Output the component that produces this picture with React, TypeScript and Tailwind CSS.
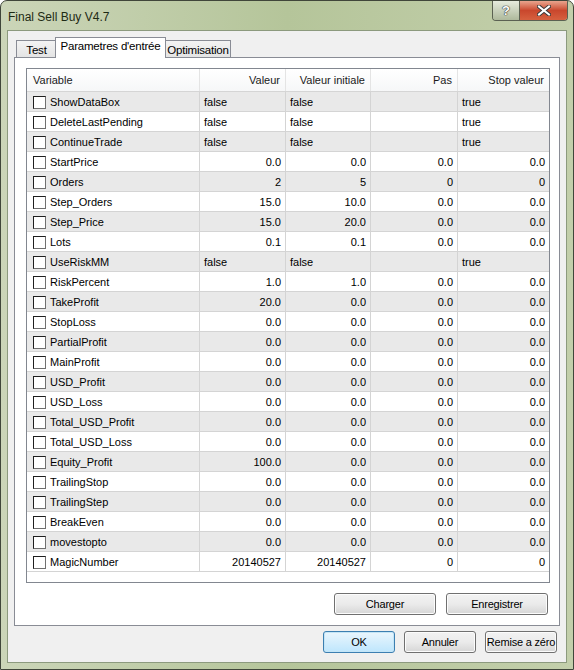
import React from "react";

type Row = { name: string; v: string; init: string; step: string; stop: string; bool?: boolean };

const zeros = (name: string): Row => ({ name, v: "0.0", init: "0.0", step: "0.0", stop: "0.0" });

const rows: Row[] = [
  { name: "ShowDataBox", v: "false", init: "false", step: "", stop: "true", bool: true },
  { name: "DeleteLastPending", v: "false", init: "false", step: "", stop: "true", bool: true },
  { name: "ContinueTrade", v: "false", init: "false", step: "", stop: "true", bool: true },
  zeros("StartPrice"),
  { name: "Orders", v: "2", init: "5", step: "0", stop: "0" },
  { name: "Step_Orders", v: "15.0", init: "10.0", step: "0.0", stop: "0.0" },
  { name: "Step_Price", v: "15.0", init: "20.0", step: "0.0", stop: "0.0" },
  { name: "Lots", v: "0.1", init: "0.1", step: "0.0", stop: "0.0" },
  { name: "UseRiskMM", v: "false", init: "false", step: "", stop: "true", bool: true },
  { name: "RiskPercent", v: "1.0", init: "1.0", step: "0.0", stop: "0.0" },
  { name: "TakeProfit", v: "20.0", init: "0.0", step: "0.0", stop: "0.0" },
  zeros("StopLoss"),
  zeros("PartialProfit"),
  zeros("MainProfit"),
  zeros("USD_Profit"),
  zeros("USD_Loss"),
  zeros("Total_USD_Profit"),
  zeros("Total_USD_Loss"),
  { name: "Equity_Profit", v: "100.0", init: "0.0", step: "0.0", stop: "0.0" },
  zeros("TrailingStop"),
  zeros("TrailingStep"),
  zeros("BreakEven"),
  zeros("movestopto"),
  { name: "MagicNumber", v: "20140527", init: "20140527", step: "0", stop: "0" },
];

function Btn({ label, w, focus }: { label: string; w: string; focus?: boolean }) {
  return (
    <div
      className={`${w} h-[22px] flex items-center justify-center whitespace-nowrap tracking-[-0.2px] rounded-[3px] border text-[11px] text-black ${
        focus
          ? "border-[#3c7fb1] bg-linear-to-b from-[#eaf6fd] to-[#bee6fd] shadow-[inset_0_0_0_1px_#c4e5f6]"
          : "border-[#707070] bg-linear-to-b from-[#f2f2f2] via-[#ebebeb] to-[#d6d6d6] shadow-[inset_0_0_0_1px_#fcfcfc]"
      }`}
    >
      {label}
    </div>
  );
}

function Cell({ w, children, left, last }: { w: string; children?: React.ReactNode; left?: boolean; last?: boolean }) {
  return (
    <div
      className={`${w} h-full flex items-center pt-[1px] ${left ? "justify-start pl-[4px]" : "justify-end pr-[4px]"} ${
        last ? "" : "border-r border-[#d4d4d4]"
      }`}
    >
      {children}
    </div>
  );
}

export default function App() {
  return (
    <div className="w-[574px] h-[670px] flex flex-col rounded-t-[7px] border border-[#40463a] bg-linear-to-r from-[#cbd5b8] via-[#b5c59a] to-[#c3cfab] font-['Liberation_Sans',Arial,sans-serif] text-black overflow-hidden">
      {/* title bar */}
      <div className="h-[29px] flex items-start justify-between pl-[7px] pr-[5px]">
        <span className="mt-[7px] text-[12px] text-[#1e2a14]">Final Sell Buy V4.7</span>
        <div className="flex h-[20px] rounded-b-[4px] border border-t-0 border-[#5b6152] overflow-hidden">
          <div className="w-[27px] flex items-center justify-center bg-linear-to-b from-[#e6ebdd] to-[#aeb99c] border-r border-[#5b6152]">
            <span className="text-[13px] font-bold text-white [text-shadow:0_0_1px_#333,0_0_1px_#333,0_0_1px_#333]">?</span>
          </div>
          <div className="w-[47px] flex items-center justify-center bg-linear-to-b from-[#e8a48e] via-[#c9472d] to-[#d6603f]">
            <svg width="14" height="11" viewBox="0 0 14 11">
              <path d="M2 1.5 L12 9.5 M12 1.5 L2 9.5" stroke="#3a3a3a" strokeWidth="4" strokeLinecap="square" />
              <path d="M2 1.5 L12 9.5 M12 1.5 L2 9.5" stroke="#ffffff" strokeWidth="2" strokeLinecap="square" />
            </svg>
          </div>
        </div>
      </div>

      {/* client area */}
      <div className="flex-1 mx-[6px] mb-[6px] border border-[#8c9a7e] bg-[#f0f0f0] flex flex-col px-[6px] pt-[6px]">
        {/* tabs */}
        <div className="h-[21px] flex items-end pl-[2px] text-[11.5px] tracking-[-0.2px] whitespace-nowrap">
          <div className="w-[41px] h-[18px] border border-b-0 border-[#898c95] bg-linear-to-b from-[#f3f3f3] to-[#e3e3e3] flex items-center justify-center leading-none pt-[2px]">
            Test
          </div>
          <div className="relative z-10 -ml-[2px] w-[111px] h-[21px] border border-b-0 border-[#898c95] bg-white flex items-start justify-center pt-[3px] leading-none">
            Parametres d'entrée
          </div>
          <div className="w-[65px] h-[18px] border border-l-0 border-b-0 border-[#898c95] bg-linear-to-b from-[#f3f3f3] to-[#e3e3e3] flex items-center justify-center leading-none pt-[2px]">
            Optimisation
          </div>
        </div>

        {/* tab panel */}
        <div className="-mt-[1px] h-[569px] border border-[#898c95] bg-white flex flex-col pl-[11px] pr-[9px] pt-[10px] text-[11px]">
          <div className="w-[524px] h-[515px] border border-[#828790] bg-white flex flex-col">
            <div className="h-[23px] flex border-b border-[#d5d5d5] bg-linear-to-b from-white to-[#f6f7f8] text-[#1a1a1a]">
              <div className="w-[173px] border-r border-[#e4e4e4] flex items-center pt-[1px] pl-[6px]">Variable</div>
              <div className="w-[86px] border-r border-[#e4e4e4] flex items-center pt-[1px] justify-end pr-[5px]">Valeur</div>
              <div className="w-[85px] border-r border-[#e4e4e4] flex items-center pt-[1px] justify-end pr-[5px]">Valeur initiale</div>
              <div className="w-[87px] border-r border-[#e4e4e4] flex items-center pt-[1px] justify-end pr-[5px]">Pas</div>
              <div className="w-[91px] flex items-center pt-[1px] justify-end pr-[5px]">Stop valeur</div>
            </div>
            {rows.map((r, i) => (
              <div
                key={r.name}
                className={`h-[20px] flex border-b border-[#d4d4d4] ${i % 2 === 0 ? "bg-[#e9e9e9]" : "bg-white"}`}
              >
                <div className="w-[173px] h-full flex items-center pt-[1px] border-r border-[#d4d4d4] pl-[6px]">
                  <div className="w-[13px] h-[13px] border border-[#1e1e1e] border-r-[#707070] border-b-[#707070] bg-white mr-[4px] shrink-0" />
                  {r.name}
                </div>
                <Cell w="w-[86px]" left={r.bool}>{r.v}</Cell>
                <Cell w="w-[85px]" left={r.bool}>{r.init}</Cell>
                <Cell w="w-[87px]">{r.step}</Cell>
                <Cell w="w-[91px]" left={r.bool} last>{r.stop}</Cell>
              </div>
            ))}
          </div>
          <div className="mt-[10px] flex justify-end gap-[10px] pr-[2px]">
            <Btn label="Charger" w="w-[102px]" />
            <Btn label="Enregistrer" w="w-[102px]" />
          </div>
        </div>

        {/* dialog buttons */}
        <div className="mt-[5px] flex justify-end gap-[9px] pr-[3px]">
          <Btn label="OK" w="w-[72px]" focus />
          <Btn label="Annuler" w="w-[72px]" />
          <Btn label="Remise a zéro" w="w-[72px]" />
        </div>
      </div>
    </div>
  );
}
